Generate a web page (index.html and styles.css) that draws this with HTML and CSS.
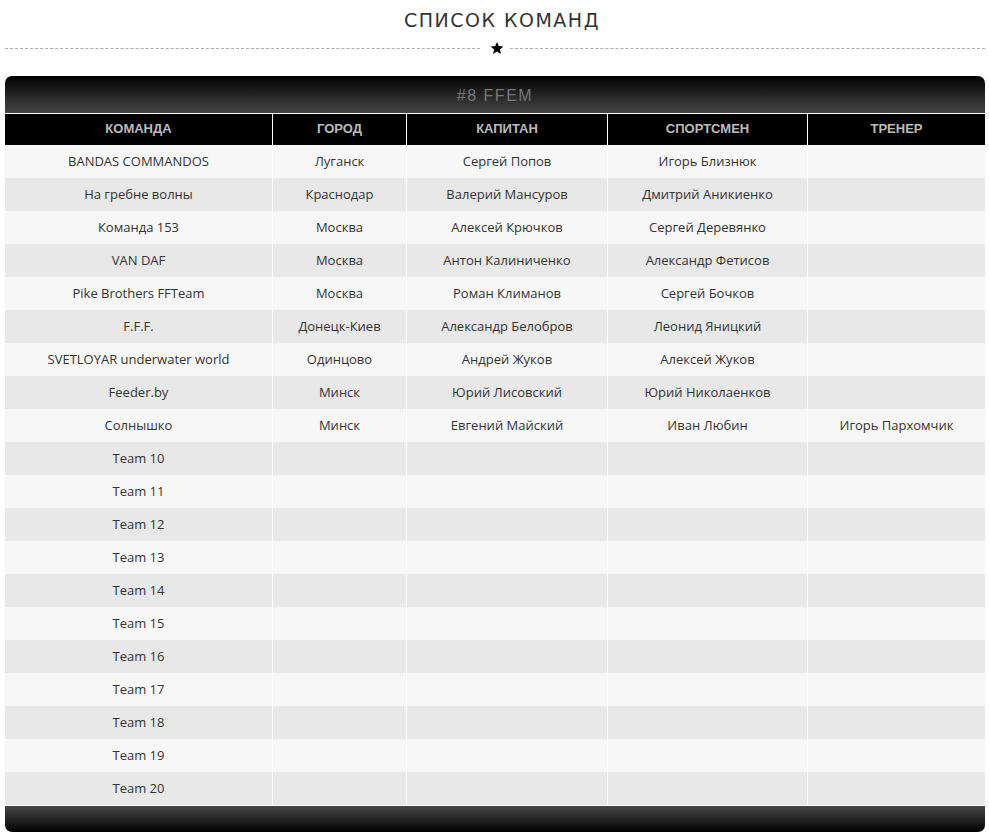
FILE: index.html
```html
<!DOCTYPE html>
<html lang="ru">
<head>
<meta charset="utf-8">
<title>Список команд</title>
<link rel="stylesheet" href="styles.css">
</head>
<body>
<div class="page">
  <h2 class="title">СПИСОК КОМАНД</h2>
  <div class="divider">
    <span class="line"></span>
    <svg class="star" width="14" height="14" viewBox="0 0 24 24"><path d="M12 1.5l3.1 7.2 7.8.7-5.9 5.2 1.8 7.7L12 18.2l-6.8 4.1L7 14.6 1.1 9.4l7.8-.7z" fill="#000"/></svg>
    <span class="line"></span>
  </div>
  <div class="board">
    <div class="caption">#8 FFEM</div>
    <table class="teams">
      <thead>
        <tr><th class="c1">КОМАНДА</th><th class="c2">ГОРОД</th><th class="c3">КАПИТАН</th><th class="c4">СПОРТСМЕН</th><th class="c5">ТРЕНЕР</th></tr>
      </thead>
      <tbody>
        <tr><td>BANDAS COMMANDOS</td><td>Луганск</td><td>Сергей Попов</td><td>Игорь Близнюк</td><td></td></tr>
        <tr><td>На гребне волны</td><td>Краснодар</td><td>Валерий Мансуров</td><td>Дмитрий Аникиенко</td><td></td></tr>
        <tr><td>Команда 153</td><td>Москва</td><td>Алексей Крючков</td><td>Сергей Деревянко</td><td></td></tr>
        <tr><td>VAN DAF</td><td>Москва</td><td>Антон Калиниченко</td><td>Александр Фетисов</td><td></td></tr>
        <tr><td>Pike Brothers FFTeam</td><td>Москва</td><td>Роман Климанов</td><td>Сергей Бочков</td><td></td></tr>
        <tr><td>F.F.F.</td><td>Донецк-Киев</td><td>Александр Белобров</td><td>Леонид Яницкий</td><td></td></tr>
        <tr><td>SVETLOYAR underwater world</td><td>Одинцово</td><td>Андрей Жуков</td><td>Алексей Жуков</td><td></td></tr>
        <tr><td>Feeder.by</td><td>Минск</td><td>Юрий Лисовский</td><td>Юрий Николаенков</td><td></td></tr>
        <tr><td>Солнышко</td><td>Минск</td><td>Евгений Майский</td><td>Иван Любин</td><td>Игорь Пархомчик</td></tr>
        <tr><td>Team 10</td><td></td><td></td><td></td><td></td></tr>
        <tr><td>Team 11</td><td></td><td></td><td></td><td></td></tr>
        <tr><td>Team 12</td><td></td><td></td><td></td><td></td></tr>
        <tr><td>Team 13</td><td></td><td></td><td></td><td></td></tr>
        <tr><td>Team 14</td><td></td><td></td><td></td><td></td></tr>
        <tr><td>Team 15</td><td></td><td></td><td></td><td></td></tr>
        <tr><td>Team 16</td><td></td><td></td><td></td><td></td></tr>
        <tr><td>Team 17</td><td></td><td></td><td></td><td></td></tr>
        <tr><td>Team 18</td><td></td><td></td><td></td><td></td></tr>
        <tr><td>Team 19</td><td></td><td></td><td></td><td></td></tr>
        <tr><td>Team 20</td><td></td><td></td><td></td><td></td></tr>
      </tbody>
    </table>
    <div class="footer"></div>
  </div>
</div>
</body>
</html>
```

FILE: styles.css
```css
html, body {
  margin: 0;
  padding: 0;
  background: #fff;
}
.page {
  padding: 0 4px 0 5px;
  font-family: "Open Sans", "Liberation Sans", sans-serif;
}
.title {
  margin: 0;
  padding-top: 7px;
  padding-left: 14px;
  height: 26px;
  text-align: center;
  font-family: "DejaVu Sans", Verdana, sans-serif;
  font-weight: normal;
  font-size: 19px;
  line-height: 26px;
  letter-spacing: 1.5px;
  color: #333;
}
.divider {
  display: flex;
  align-items: center;
  gap: 6px;
  height: 16px;
  margin-top: 7px;
}
.divider .line {
  flex: 1;
  height: 0;
  border-top: 1px dashed #aaa;
}
.divider .star {
  display: block;
  flex: none;
  margin-left: 4px;
}
.board {
  margin-top: 20px;
}
.caption {
  height: 37px;
  border-radius: 7px 7px 0 0;
  background: linear-gradient(to bottom, #000 0%, #1a1a1a 35%, #454545 100%);
  color: #777;
  text-align: center;
  font-family: "Liberation Sans", Arial, sans-serif;
  font-size: 16px;
  line-height: 40px;
  letter-spacing: 1.5px;
}
.teams {
  width: 100%;
  border-collapse: separate;
  border-spacing: 0;
  table-layout: fixed;
}
.teams th {
  background: #000;
  color: #bbb;
  font-family: "Liberation Sans", Arial, sans-serif;
  font-weight: bold;
  font-size: 13px;
  height: 29px;
  padding: 0 0 2px;
  border-top: 1px solid #fff;
  text-align: center;
}
.teams th + th,
.teams td + td {
  border-left: 1px solid #fff;
}
.teams .c1 { width: 267px; }
.teams .c2 { width: 133px; }
.teams .c3 { width: 200px; }
.teams .c4 { width: 199px; }
.teams td {
  height: 31px;
  padding: 0 0 2px;
  text-align: center;
  font-size: 13px;
  color: #333;
  background: #f7f7f7;
}
.teams tbody tr:nth-child(even) td {
  background: #e8e8e8;
}
.footer {
  height: 26px;
  border-top: 1px solid #fff;
  border-radius: 0 0 7px 7px;
  background: linear-gradient(to bottom, #454545 0%, #1a1a1a 65%, #000 100%);
}
```
